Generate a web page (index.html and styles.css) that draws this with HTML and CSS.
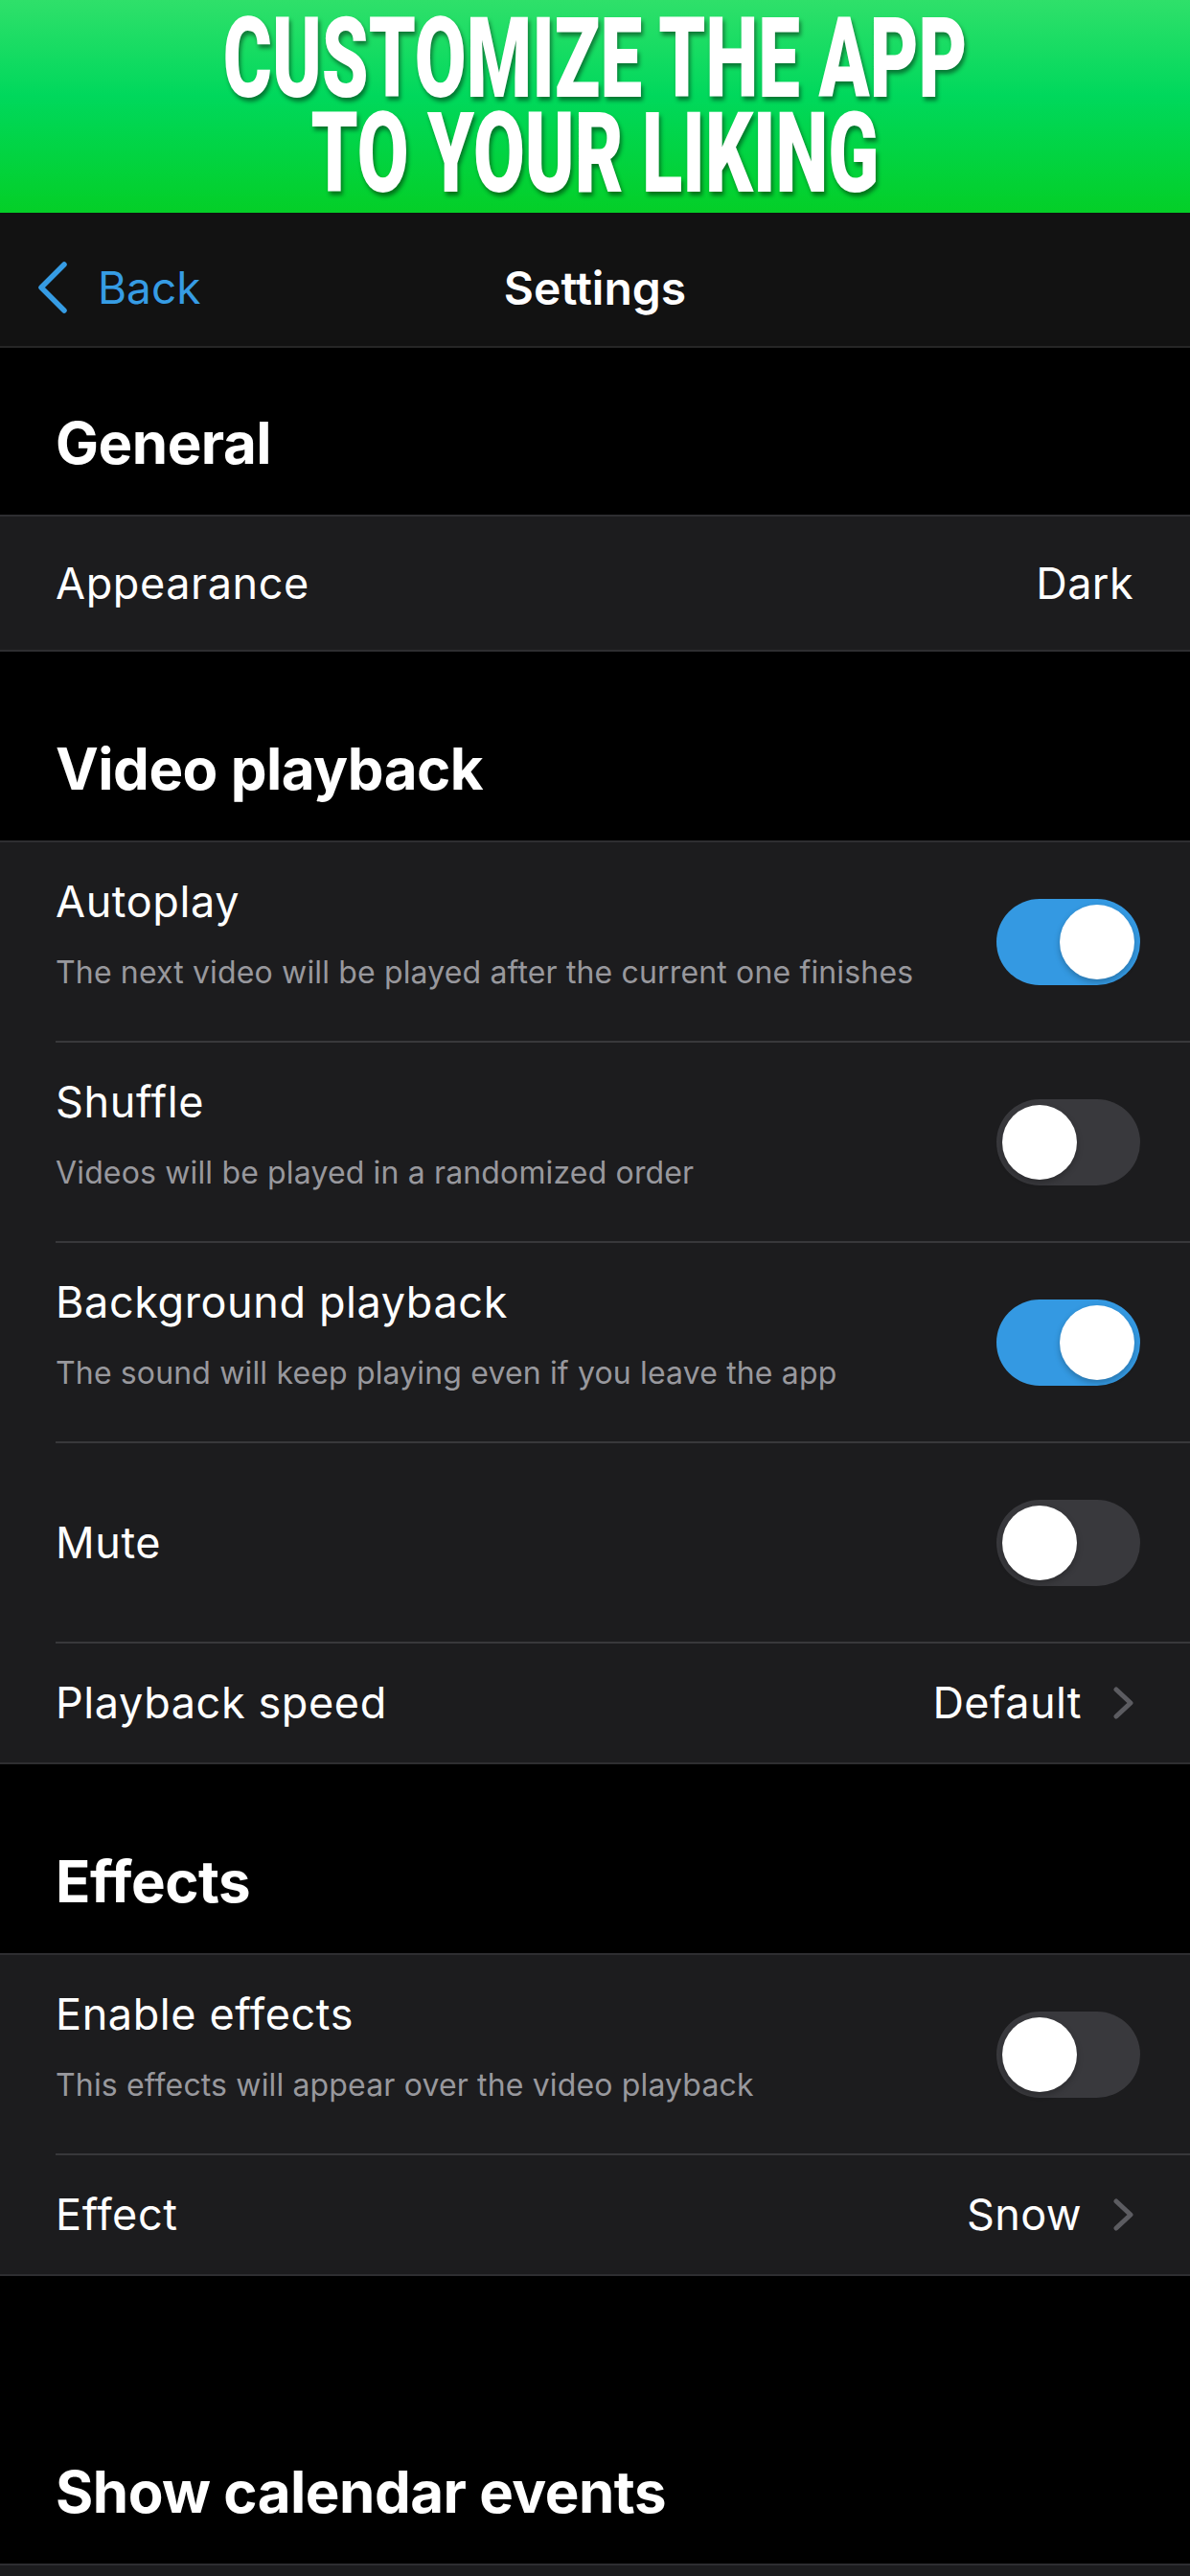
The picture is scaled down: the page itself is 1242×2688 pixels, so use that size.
FILE: index.html
```html
<!DOCTYPE html>
<html lang="en">
<head>
  <meta charset="UTF-8" />
  <meta name="viewport" content="width=device-width, initial-scale=1.0" />
  <title>Settings</title>
  <link rel="stylesheet" href="styles.css">
</head>
<body>
<div class="screen">

  <div class="banner">
    <h1><span>CUSTOMIZE THE APP</span><span>TO YOUR LIKING</span></h1>
  </div>

  <header class="navbar">
    <a class="back" href="#">
      <svg width="34" height="56" viewBox="0 0 34 56"><polyline points="29,4 5,28 29,52" /></svg>
      Back
    </a>
    <div class="title">Settings</div>
    <div></div>
  </header>

  <h2 class="section-title general">General</h2>
  <div class="group">
    <div class="row big">
      <div class="row-body">
        <div class="label">Appearance</div>
        <div class="value">Dark</div>
      </div>
    </div>
  </div>

  <h2 class="section-title">Video playback</h2>
  <div class="group">
    <div class="row tall">
      <div class="row-body">
        <div class="row-text">
          <div class="label">Autoplay</div>
          <div class="hint">The next video will be played after the current one finishes</div>
        </div>
        <span class="toggle on"><span class="thumb"></span></span>
      </div>
    </div>
    <div class="row tall">
      <div class="row-body">
        <div class="row-text">
          <div class="label">Shuffle</div>
          <div class="hint">Videos will be played in a randomized order</div>
        </div>
        <span class="toggle"><span class="thumb"></span></span>
      </div>
    </div>
    <div class="row tall">
      <div class="row-body">
        <div class="row-text">
          <div class="label">Background playback</div>
          <div class="hint">The sound will keep playing even if you leave the app</div>
        </div>
        <span class="toggle on"><span class="thumb"></span></span>
      </div>
    </div>
    <div class="row tall">
      <div class="row-body">
        <div class="label">Mute</div>
        <span class="toggle"><span class="thumb"></span></span>
      </div>
    </div>
    <div class="row link">
      <div class="row-body">
        <div class="label">Playback speed</div>
        <div class="value">Default
          <svg class="chev" width="21" height="34" viewBox="0 0 21 34"><polyline points="3,3 18,17 3,31" /></svg>
        </div>
      </div>
    </div>
  </div>

  <h2 class="section-title">Effects</h2>
  <div class="group">
    <div class="row tall">
      <div class="row-body">
        <div class="row-text">
          <div class="label">Enable effects</div>
          <div class="hint">This effects will appear over the video playback</div>
        </div>
        <span class="toggle"><span class="thumb"></span></span>
      </div>
    </div>
    <div class="row link">
      <div class="row-body">
        <div class="label">Effect</div>
        <div class="value">Snow
          <svg class="chev" width="21" height="34" viewBox="0 0 21 34"><polyline points="3,3 18,17 3,31" /></svg>
        </div>
      </div>
    </div>
  </div>

  <h2 class="section-title calendar">Show calendar events</h2>
  <div class="group">
    <div class="row big">
      <div class="row-body"></div>
    </div>
  </div>

</div>
</body>
</html>
```

FILE: styles.css
```css
body {
  margin: 0;
  background: #000;
  font-family: Inter, "Noto Sans", sans-serif;
  color: white;
}
.screen {
  height: 2688px;
  overflow: hidden;
}
.banner {
  height: 222px;
  box-sizing: border-box;
  padding-top: 12px;
  background: linear-gradient(#2fe06a, #00d85c 45%, #04cf27);
  text-align: center;
}
.banner h1 {
  margin: 0;
  font-family: Roboto, "Liberation Sans", sans-serif;
  font-weight: 900;
  font-size: 116px;
  line-height: 99px;
  text-shadow: 3px 4px 5px rgba(0,0,0,0.45);
}
.banner h1 span {
  display: block;
  transform: scaleX(0.673);
}
.navbar {
  height: 141px;
  box-sizing: border-box;
  padding-top: 17px;
  background: #121212;
  border-bottom: 2px solid #262626;
  display: grid;
  grid-template-columns: 1fr auto 1fr;
  align-items: center;
}
.back {
  display: flex;
  align-items: center;
  gap: 30px;
  padding-left: 38px;
  color: #369ce4;
  text-decoration: none;
  font-size: 46px;
}
.back svg polyline {
  fill: none;
  stroke: #369ce4;
  stroke-width: 5.5;
  stroke-linecap: round;
  stroke-linejoin: round;
}
.navbar .title {
  font-size: 48px;
  font-weight: 600;
}
.section-title {
  margin: 0;
  height: 197px;
  box-sizing: border-box;
  display: flex;
  align-items: flex-end;
  padding: 0 0 39px 58px;
  font-size: 60px;
  line-height: 72px;
  font-weight: 700;
  letter-spacing: -0.5px;
}
.section-title.general {
  height: 174px;
}
.section-title.calendar {
  height: 300px;
}
.group {
  background: #1c1c1e;
  border-top: 2px solid #2e2e31;
  border-bottom: 2px solid #2e2e31;
}
.row {
  padding-left: 58px;
}
.row-body {
  display: flex;
  align-items: center;
  justify-content: space-between;
  padding-right: 52px;
  border-bottom: 2px solid #38383b;
}
.row:last-child .row-body {
  border-bottom: none;
}
.row.big .row-body {
  height: 139px;
}
.row.tall .row-body {
  height: 207px;
}
.row.link .row-body {
  height: 124px;
}
.label {
  font-size: 45px;
  line-height: 56px;
  letter-spacing: 0.6px;
}
.row-text {
  padding-bottom: 17px;
}
.hint {
  margin-top: 26px;
  font-size: 32px;
  line-height: 40px;
  letter-spacing: 0.15px;
  color: #98989d;
}
.value {
  display: flex;
  align-items: center;
  gap: 33px;
  margin-right: 7px;
  font-size: 45px;
  line-height: 56px;
  letter-spacing: 0.4px;
}
.chev polyline {
  fill: none;
  stroke: #5c5c61;
  stroke-width: 5;
  stroke-linecap: round;
  stroke-linejoin: round;
}
.toggle {
  width: 150px;
  height: 90px;
  box-sizing: border-box;
  padding: 6px;
  border-radius: 45px;
  background: #39393d;
  display: flex;
  justify-content: flex-start;
}
.toggle.on {
  background: #3499e2;
  justify-content: flex-end;
}
.thumb {
  width: 78px;
  height: 78px;
  border-radius: 50%;
  background: white;
  box-shadow: 0 3px 6px rgba(0,0,0,0.25);
}
```
